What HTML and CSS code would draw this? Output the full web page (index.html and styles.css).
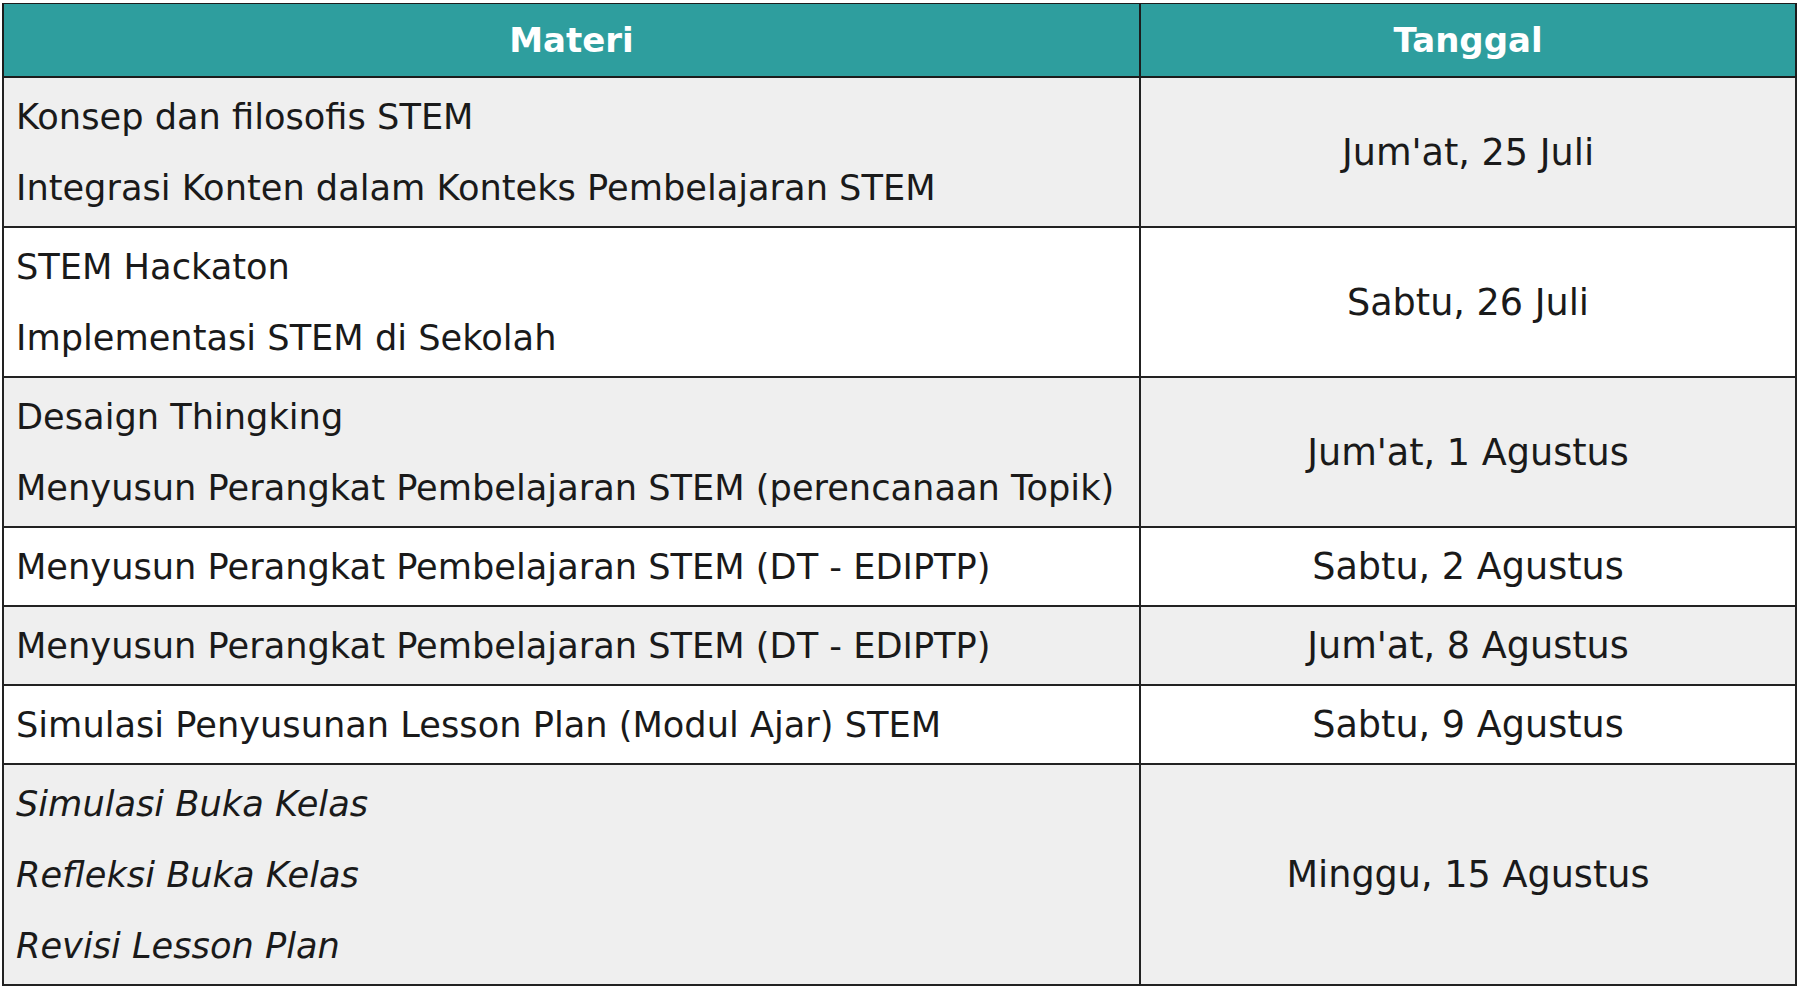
FILE: index.html
```html
<!DOCTYPE html>
<html lang="id">
<head>
<meta charset="utf-8">
<title>Jadwal Materi STEM</title>
<link rel="stylesheet" href="styles.css">
</head>
<body>
<table class="schedule">
  <colgroup>
    <col class="col-materi">
    <col class="col-tanggal">
  </colgroup>
  <thead>
    <tr>
      <th>Materi</th>
      <th>Tanggal</th>
    </tr>
  </thead>
  <tbody>
    <tr class="odd">
      <td class="materi"><p>Konsep dan filosofis STEM</p><p>Integrasi Konten dalam Konteks Pembelajaran STEM</p></td>
      <td class="tanggal">Jum'at, 25 Juli</td>
    </tr>
    <tr class="even">
      <td class="materi"><p>STEM Hackaton</p><p>Implementasi STEM di Sekolah</p></td>
      <td class="tanggal">Sabtu, 26 Juli</td>
    </tr>
    <tr class="odd">
      <td class="materi"><p>Desaign Thingking</p><p>Menyusun Perangkat Pembelajaran STEM (perencanaan Topik)</p></td>
      <td class="tanggal">Jum'at, 1 Agustus</td>
    </tr>
    <tr class="even">
      <td class="materi"><p>Menyusun Perangkat Pembelajaran STEM (DT - EDIPTP)</p></td>
      <td class="tanggal">Sabtu, 2 Agustus</td>
    </tr>
    <tr class="odd">
      <td class="materi"><p>Menyusun Perangkat Pembelajaran STEM (DT - EDIPTP)</p></td>
      <td class="tanggal">Jum'at, 8 Agustus</td>
    </tr>
    <tr class="even">
      <td class="materi"><p>Simulasi Penyusunan Lesson Plan (Modul Ajar) STEM</p></td>
      <td class="tanggal">Sabtu, 9 Agustus</td>
    </tr>
    <tr class="odd">
      <td class="materi italic"><p>Simulasi Buka Kelas</p><p>Refleksi Buka Kelas</p><p>Revisi Lesson Plan</p></td>
      <td class="tanggal">Minggu, 15 Agustus</td>
    </tr>
  </tbody>
</table>
</body>
</html>
```
FILE: styles.css
```css
html, body {
  margin: 0;
  padding: 0;
  background: #ffffff;
}

body {
  padding: 3px 0 0 2px;
  font-family: "DejaVu Sans", "Liberation Sans", sans-serif;
  color: #1a1a1a;
}

.schedule {
  width: 1793px;
  border-collapse: collapse;
  table-layout: fixed;
}

.col-materi {
  width: 1137px;
}

.col-tanggal {
  width: 656px;
}

.schedule th {
  background: #2e9e9e;
  color: #ffffff;
  font-weight: bold;
  font-size: 34px;
  height: 72px;
  padding: 0;
  text-align: center;
  vertical-align: middle;
  border: 2px solid #1c1c1c;
  border-top-width: 1px;
}

.schedule td {
  border: 2px solid #222222;
  padding: 3px 12px;
  vertical-align: middle;
}

.schedule tr.odd td {
  background: #efefef;
}

.schedule tr.even td {
  background: #ffffff;
}

.materi p {
  margin: 0;
  font-size: 35.2px;
  line-height: 71px;
  white-space: nowrap;
}

.materi.italic p {
  font-style: italic;
}

.tanggal {
  text-align: center;
  font-size: 36.6px;
}
```
